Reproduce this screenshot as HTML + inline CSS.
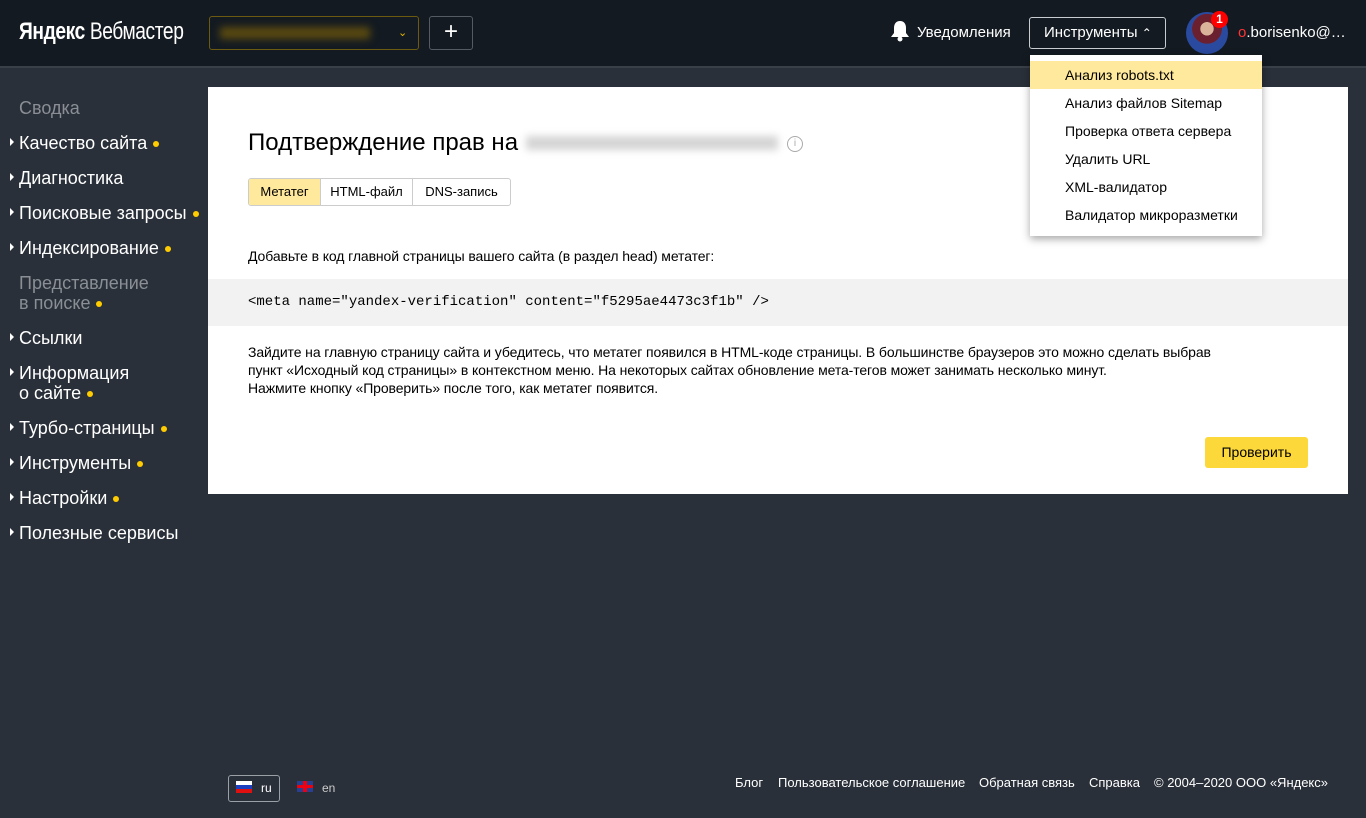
<!DOCTYPE html>
<html><head><meta charset="utf-8"><style>
*{margin:0;padding:0;box-sizing:border-box}
body{width:1366px;height:818px;background:#2a3039;font-family:"Liberation Sans",Arial,sans-serif;position:relative;overflow:hidden}
.a{position:absolute}
#hdr{left:0;top:0;width:1366px;height:68px;background:#131a21;border-bottom:2px solid #3a4048}
.nav{left:19px;color:#fff;font-size:18px}
.nav.g{color:#8a8f95}
.tri{position:absolute;left:-9px;top:5px;width:0;height:0;border-left:4px solid #fff;border-top:4px solid transparent;border-bottom:4px solid transparent}
.dot{display:inline-block;width:6px;height:6px;border-radius:50%;background:#fc0;margin-left:6px;vertical-align:middle}
#card{left:208px;top:87px;width:1140px;height:407px;background:#fff}
.dd div{height:28px;line-height:28px;padding-left:35px;font-size:14px;color:#000}
.ft{color:#fff;font-size:13px;top:775px}
</style></head><body>
<div id="hdr" class="a">
 <div class="a" style="left:19px;top:18px;color:#fff;font-size:24px;letter-spacing:-0.5px;transform:scaleX(.8);transform-origin:left"><b>Яндекс</b> Вебмастер</div>
 <div class="a" style="left:209px;top:16px;width:210px;height:34px;border:1px solid #6b5a10;border-radius:3px">
  <div class="a" style="left:10px;top:10px;width:150px;height:12px;background:#5b4a10;filter:blur(4px)"></div>
  <div class="a" style="left:188px;top:9px;color:#e6b800;font-size:11px">&#8964;</div>
 </div>
 <div class="a" style="left:429px;top:16px;width:44px;height:34px;border:1px solid #555b63;border-radius:3px;color:#fff;font-size:24px;text-align:center;line-height:30px">+</div>
 <svg class="a" style="left:889px;top:20px" width="22" height="22" viewBox="0 0 22 22"><path d="M11 1c-4 0-6 3-6 7v5l-3 4h18l-3-4V8c0-4-2-7-6-7z" fill="#fff"/><circle cx="11" cy="19" r="2.5" fill="#fff"/></svg>
 <div class="a" style="left:917px;top:24px;color:#fff;font-size:15px">Уведомления</div>
 <div class="a" style="left:1029px;top:17px;width:137px;height:32px;border:1px solid #c8ccd0;border-radius:3px;color:#fff;font-size:15px;line-height:30px;padding-left:14px">Инструменты <span style="font-size:12px">&#8963;</span></div>
 <div class="a" style="left:1186px;top:12px;width:42px;height:42px;border-radius:50%;background:radial-gradient(circle at 50% 40%,#d9b39a 0 20%,#6b2030 21% 45%,#2a4aa0 46%)"></div>
 <div class="a" style="left:1211px;top:11px;width:17px;height:17px;border-radius:50%;background:#f00;color:#fff;font-size:12px;font-weight:bold;text-align:center;line-height:17px">1</div>
 <div class="a" style="left:1238px;top:24px;color:#fff;font-size:15px"><span style="color:#f33">o</span>.borisenko@…</div>
</div>

<div class="a nav g" style="top:98px">Сводка</div>
<div class="a nav" style="top:133px"><i class="tri"></i>Качество сайта<span class="dot"></span></div>
<div class="a nav" style="top:168px"><i class="tri"></i>Диагностика</div>
<div class="a nav" style="top:203px"><i class="tri"></i>Поисковые запросы<span class="dot"></span></div>
<div class="a nav" style="top:238px"><i class="tri"></i>Индексирование<span class="dot"></span></div>
<div class="a nav g" style="top:273px;line-height:20px">Представление<br>в поиске<span class="dot"></span></div>
<div class="a nav" style="top:328px"><i class="tri"></i>Ссылки</div>
<div class="a nav" style="top:363px;line-height:20px"><i class="tri"></i>Информация<br>о сайте<span class="dot"></span></div>
<div class="a nav" style="top:418px"><i class="tri"></i>Турбо-страницы<span class="dot"></span></div>
<div class="a nav" style="top:453px"><i class="tri"></i>Инструменты<span class="dot"></span></div>
<div class="a nav" style="top:488px"><i class="tri"></i>Настройки<span class="dot"></span></div>
<div class="a nav" style="top:523px"><i class="tri"></i>Полезные сервисы</div>

<div id="card" class="a">
 <div class="a" style="left:40px;top:42px;font-size:24px;color:#000">Подтверждение прав на</div>
 <div class="a" style="left:318px;top:49px;width:252px;height:14px;background:#d4d4d4;filter:blur(4px)"></div>
 <div class="a" style="left:579px;top:49px;width:16px;height:16px;border:1.5px solid #aaa;border-radius:50%;color:#aaa;font-size:10px;text-align:center;line-height:13px">i</div>
 <div class="a" style="left:40px;top:91px;height:28px;border:1px solid #ccc;border-radius:3px;display:flex;font-size:13px;line-height:26px;color:#000;overflow:hidden">
  <div style="background:#fee99c;width:72px;text-align:center;border-right:1px solid #ccc">Метатег</div>
  <div style="width:92px;text-align:center;border-right:1px solid #ccc">HTML-файл</div>
  <div style="width:97px;text-align:center">DNS-запись</div>
 </div>
 <div class="a" style="left:40px;top:161px;font-size:14px;color:#000;letter-spacing:-0.1px">Добавьте в код главной страницы вашего сайта (в раздел head) метатег:</div>
 <div class="a" style="left:0;top:192px;width:1140px;height:47px;background:#f2f2f2"></div>
 <div class="a" style="left:40px;top:207px;font-family:'Liberation Mono',monospace;font-size:14px;color:#000">&lt;meta name="yandex-verification" content="f5295ae4473c3f1b" /&gt;</div>
 <div class="a" style="left:40px;top:256px;font-size:14px;line-height:18px;color:#000;width:1080px;letter-spacing:-0.1px;white-space:nowrap">Зайдите на главную страницу сайта и убедитесь, что метатег появился в HTML-коде страницы. В большинстве браузеров это можно сделать выбрав<br>пункт «Исходный код страницы» в контекстном меню. На некоторых сайтах обновление мета-тегов может занимать несколько минут.<br>Нажмите кнопку «Проверить» после того, как метатег появится.</div>
 <div class="a" style="left:997px;top:350px;width:103px;height:31px;background:#fdd83a;border-radius:3px;font-size:14px;line-height:31px;text-align:center;color:#000">Проверить</div>
</div>

<div class="a dd" style="left:1030px;top:55px;width:232px;height:181px;background:#fff;box-shadow:0 3px 8px rgba(0,0,0,.35);padding-top:6px">
 <div style="background:#fee99c">Анализ robots.txt</div>
 <div>Анализ файлов Sitemap</div>
 <div>Проверка ответа сервера</div>
 <div>Удалить URL</div>
 <div>XML-валидатор</div>
 <div>Валидатор микроразметки</div>
</div>

<div class="a" style="left:228px;top:775px;width:52px;height:27px;border:1px solid #9aa0a6;border-radius:3px"></div>
<div class="a" style="left:236px;top:781px;width:16px;height:12px;background:linear-gradient(#fff 0 33%,#1c3fbf 33% 66%,#e01010 66%)"></div>
<div class="a" style="left:261px;top:781px;color:#fff;font-size:12px">ru</div>
<div class="a" style="left:297px;top:781px;width:16px;height:11px;background:#2a3f8f"><div style="position:absolute;left:6px;top:0;width:4px;height:11px;background:#e01"></div><div style="position:absolute;left:0;top:4px;width:16px;height:3px;background:#e01"></div></div>
<div class="a" style="left:322px;top:781px;color:#ccc;font-size:12px">en</div>

<div class="a ft" style="left:735px">Блог</div>
<div class="a ft" style="left:778px">Пользовательское соглашение</div>
<div class="a ft" style="left:979px">Обратная связь</div>
<div class="a ft" style="left:1089px">Справка</div>
<div class="a ft" style="left:1154px">© 2004–2020 ООО «Яндекс»</div>
</body></html>
